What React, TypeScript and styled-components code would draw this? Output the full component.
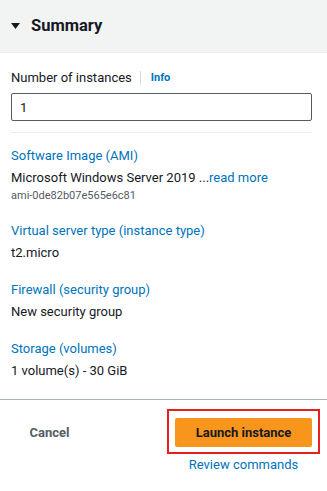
import React from "react";
import styled, { createGlobalStyle } from "styled-components";

const GlobalStyle = createGlobalStyle`
  html, body { margin: 0; padding: 0; background: #ffffff; }
  body { font-family: Roboto, "Liberation Sans", Arial, sans-serif; color: #16191f; }
  * { box-sizing: border-box; }
`;

const Panel = styled.div`
  width: 327px;
  height: 491px;
  display: flex;
  flex-direction: column;
  background: #ffffff;
`;

const Header = styled.div`
  height: 53px;
  display: flex;
  align-items: center;
  gap: 11px;
  padding-left: 11px;
  background: #f2f3f3;
  border-bottom: 1px solid #eaeded;
`;

const Title = styled.h2`
  margin: 0;
  font-size: 16.5px;
  line-height: 22px;
  font-weight: 700;
  color: #16191f;
`;

const Body = styled.div`
  padding: 14px 15px 0 11px;
  height: 346px;
  display: flex;
  flex-direction: column;
`;

const FieldLabelRow = styled.div`
  display: flex;
  align-items: center;
  height: 22px;
  font-size: 13px;
  line-height: 22px;
`;

const Separator = styled.span`
  width: 1px;
  height: 14px;
  background: #d5dbdb;
  margin: 0 10px 0 8px;
`;

const InfoLink = styled.a`
  font-size: 11px;
  font-weight: 700;
  color: #0073bb;
  text-decoration: none;
`;

const Input = styled.input`
  margin-top: 4px;
  width: 100%;
  height: 28px;
  border: 1px solid #545b64;
  border-radius: 2px;
  padding: 0 8px;
  font-family: inherit;
  font-size: 13px;
  color: #16191f;
  outline: none;
`;

const Divider = styled.hr`
  margin: 11px 0 0;
  border: none;
  border-top: 1px solid #eaeded;
  height: 0;
`;

const ItemList = styled.div`
  display: flex;
  flex-direction: column;
  gap: 16px;
  padding-top: 12px;
`;

const Item = styled.div`
  display: flex;
  flex-direction: column;
`;

const ItemLabel = styled.a`
  font-size: 13px;
  line-height: 22px;
  color: #0073bb;
  text-decoration: none;
`;

const ItemValue = styled.div`
  font-size: 13px;
  line-height: 21px;
  color: #16191f;
  white-space: nowrap;
`;

const ReadMore = styled.a`
  color: #0073bb;
  text-decoration: none;
`;

const ItemSub = styled.div`
  font-size: 11px;
  line-height: 16px;
  color: #545b64;
`;

const Footer = styled.div`
  border-top: 1px solid #aab7b8;
  display: flex;
  justify-content: space-between;
  align-items: flex-start;
  padding: 18px 15px 0 11px;
`;

const CancelButton = styled.button`
  width: 77px;
  height: 29px;
  border: none;
  background: transparent;
  font-family: inherit;
  font-size: 13px;
  font-weight: 700;
  color: #545b64;
  cursor: pointer;
`;

const PrimaryGroup = styled.div`
  display: flex;
  flex-direction: column;
  align-items: center;
`;

const PrimaryButton = styled.button`
  position: relative;
  width: 137px;
  height: 29px;
  border: none;
  border-radius: 2px;
  background: #f8951d;
  font-family: inherit;
  font-size: 13px;
  font-weight: 700;
  color: #16191f;
  cursor: pointer;

  &::after {
    content: "";
    position: absolute;
    left: -8px;
    right: -8px;
    top: -9px;
    bottom: -7px;
    border: 2px solid #e6201c;
    pointer-events: none;
  }
`;

const ReviewLink = styled.a`
  margin-top: 7px;
  font-size: 13px;
  line-height: 22px;
  color: #0073bb;
  text-decoration: none;
`;

const Caret = () => (
  <svg width="9" height="6" viewBox="0 0 9 6">
    <polygon points="0,0 9,0 4.5,6" fill="#16191f" />
  </svg>
);

const items = [
  {
    label: "Software Image (AMI)",
    value: (
      <>
        Microsoft Windows Server 2019 ...<ReadMore href="#">read more</ReadMore>
      </>
    ),
    sub: "ami-0de82b07e565e6c81",
  },
  { label: "Virtual server type (instance type)", value: "t2.micro" },
  { label: "Firewall (security group)", value: "New security group" },
  { label: "Storage (volumes)", value: "1 volume(s) - 30 GiB" },
];

export default function App() {
  return (
    <>
      <GlobalStyle />
      <Panel>
        <Header>
          <Caret />
          <Title>Summary</Title>
        </Header>
        <Body>
          <FieldLabelRow>
            Number of instances
            <Separator />
            <InfoLink href="#">Info</InfoLink>
          </FieldLabelRow>
          <Input defaultValue="1" />
          <Divider />
          <ItemList>
            {items.map((it) => (
              <Item key={it.label}>
                <ItemLabel href="#">{it.label}</ItemLabel>
                <ItemValue>{it.value}</ItemValue>
                {it.sub && <ItemSub>{it.sub}</ItemSub>}
              </Item>
            ))}
          </ItemList>
        </Body>
        <Footer>
          <CancelButton>Cancel</CancelButton>
          <PrimaryGroup>
            <PrimaryButton>Launch instance</PrimaryButton>
            <ReviewLink href="#">Review commands</ReviewLink>
          </PrimaryGroup>
        </Footer>
      </Panel>
    </>
  );
}
